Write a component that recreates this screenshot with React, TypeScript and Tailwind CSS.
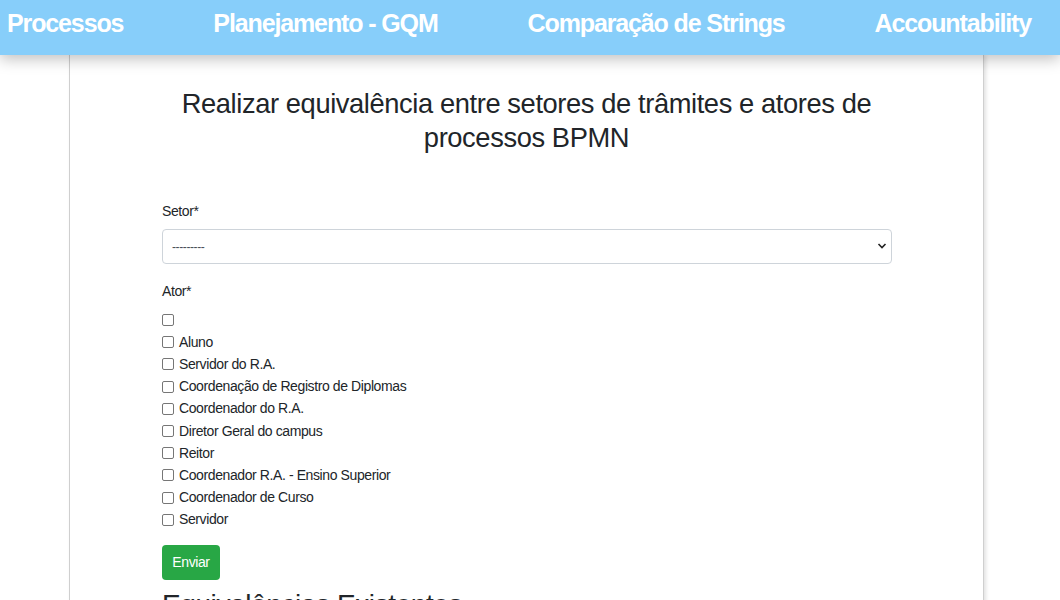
const navItems = ["Processos", "Planejamento - GQM", "Comparação de Strings", "Accountability"];

const atores = [
  "",
  "Aluno",
  "Servidor do R.A.",
  "Coordenação de Registro de Diplomas",
  "Coordenador do R.A.",
  "Diretor Geral do campus",
  "Reitor",
  "Coordenador R.A. - Ensino Superior",
  "Coordenador de Curso",
  "Servidor",
];

export default function App() {
  return (
    <div className="h-[600px] overflow-hidden bg-white font-['Liberation_Sans',Arial,sans-serif] tracking-tight text-[#212529]">
      {/* top nav */}
      <nav className="relative z-10 flex h-[55px] items-start gap-[90px] bg-[#87cefa] pl-[7px] pt-[11px] shadow-[0_4px_14px_rgba(0,0,0,0.25)]">
        {navItems.map((item) => (
          <a key={item} className="whitespace-nowrap text-[25px] font-bold leading-none tracking-[-0.045em] text-white">
            {item}
          </a>
        ))}
      </nav>

      <div className="mx-[69px] w-[915px] border-x border-[#cfcfcf] shadow-[2px_0_4px_rgba(0,0,0,0.12)] px-[92px] pt-[32px]">
        <h3 className="text-center text-[27.3px] leading-[34px]">
          Realizar equivalência entre setores de trâmites e atores de processos BPMN
        </h3>

        <form className="mt-[46px] text-[14px]">
          <label className="block leading-[20px]">Setor*</label>
          <div className="relative mt-[8px]">
            <select className="h-[35px] w-[730px] appearance-none rounded-[4px] border border-[#ced4da] bg-white px-[9px] text-[12px] text-[#495057]">
              <option>---------</option>
            </select>
            <svg className="pointer-events-none absolute right-[4px] top-[13px]" width="10" height="8" viewBox="0 0 10 8">
              <path d="M1.5 2 L5 5.5 L8.5 2" fill="none" stroke="#222" strokeWidth="1.6" />
            </svg>
          </div>

          <label className="mt-[17px] block leading-[20px]">Ator*</label>
          <ul className="mt-[8px]">
            {atores.map((a, i) => (
              <li key={i} className="flex h-[22.2px] items-center gap-[5px]">
                <span className="h-[12px] w-[12px] shrink-0 rounded-[2px] border border-[#767676] bg-white" />
                <span>{a}</span>
              </li>
            ))}
          </ul>

          <button type="button" className="mt-[14px] h-[35px] w-[58px] rounded-[4px] bg-[#28a745] text-[14px] text-white">
            Enviar
          </button>
        </form>

        <h3 className="mt-[8px] text-[28px] leading-[34px]">Equivalências Existentes</h3>
      </div>
    </div>
  );
}
